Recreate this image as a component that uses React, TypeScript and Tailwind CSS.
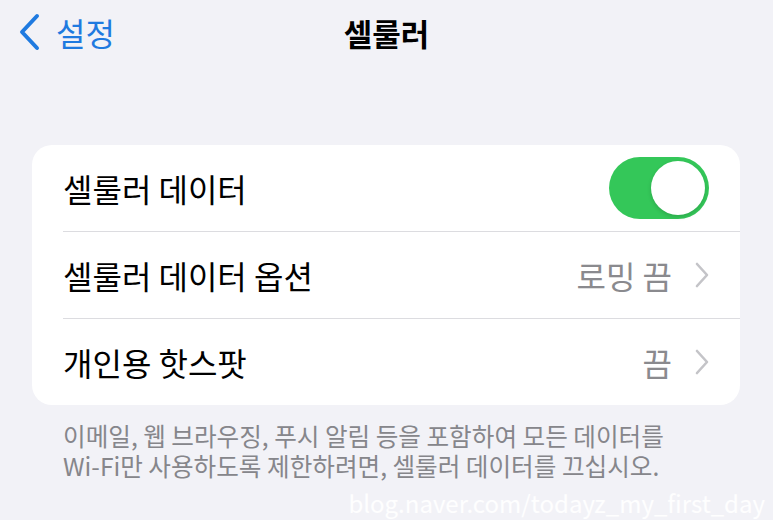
import React from "react";

const font = { fontFamily: '"Noto Sans CJK KR", "Noto Sans", sans-serif' };

function Chevron() {
  return (
    <svg width="14" height="26" viewBox="0 0 14 26" fill="none" className="shrink-0">
      <path d="M2 2L12 13L2 24" stroke="#c4c4c8" strokeWidth="2.6" strokeLinecap="round" strokeLinejoin="round" />
    </svg>
  );
}

function Toggle() {
  return (
    <div className="w-[100px] h-[62px] rounded-full bg-[#34c759] flex items-center justify-end p-[4px]">
      <div className="w-[54px] h-[54px] rounded-full bg-white shadow-[0_2px_4px_rgba(0,0,0,0.15)]" />
    </div>
  );
}

interface Row {
  label: string;
  value?: string;
  toggle?: boolean;
}

const rows: Row[] = [
  { label: "셀룰러 데이터", toggle: true },
  { label: "셀룰러 데이터 옵션", value: "로밍 끔" },
  { label: "개인용 핫스팟", value: "끔" },
];

export default function App() {
  return (
    <div className="w-[773px] h-[520px] bg-[#f2f2f7] overflow-hidden flex flex-col" style={font}>
      {/* nav bar */}
      <div className="relative h-[64px] flex items-center">
        <div className="flex items-center pl-[18px] gap-[16px] text-[#1f7ae0] text-[32px]">
          <svg width="22" height="38" viewBox="0 0 22 38" fill="none">
            <path d="M19 3L4 19L19 35" stroke="#1f7ae0" strokeWidth="4" strokeLinecap="round" strokeLinejoin="round" />
          </svg>
          <span className="leading-none">설정</span>
        </div>
        <div className="absolute inset-x-0 top-0 h-[64px] flex items-center justify-center text-[31px] font-bold text-black leading-none">
          셀룰러
        </div>
      </div>

      {/* card */}
      <div className="mt-[81px] mx-[32px] w-[708px] bg-white rounded-[20px] flex flex-col">
        {rows.map((r, i) => (
          <div key={r.label} className="flex flex-col">
            {i > 0 && <div className="ml-[31px] h-px bg-[#dcdce0]" />}
            <div className="h-[86px] flex items-center justify-between pl-[31px] pr-[31px]">
              <span className="text-[32px] text-black leading-none">{r.label}</span>
              {r.toggle ? (
                <Toggle />
              ) : (
                <div className="flex items-center gap-[23px]">
                  <span className="text-[32px] text-[#8a8a8e] leading-none">{r.value}</span>
                  <Chevron />
                </div>
              )}
            </div>
          </div>
        ))}
      </div>

      {/* footer */}
      <div className="pl-[63px] pt-[18px] text-[24.6px] text-[#86868b] flex flex-col gap-[6px]">
        <div className="h-[24px] leading-[24px]">이메일, 웹 브라우징, 푸시 알림 등을 포함하여 모든 데이터를</div>
        <div className="h-[24px] leading-[24px]">Wi-Fi만 사용하도록 제한하려면, 셀룰러 데이터를 끄십시오.</div>
      </div>

      <div className="flex justify-end pr-[8px] pt-[14px] text-[24px] leading-[24px] text-white/90">
        blog.naver.com/todayz_my_first_day
      </div>
    </div>
  );
}
